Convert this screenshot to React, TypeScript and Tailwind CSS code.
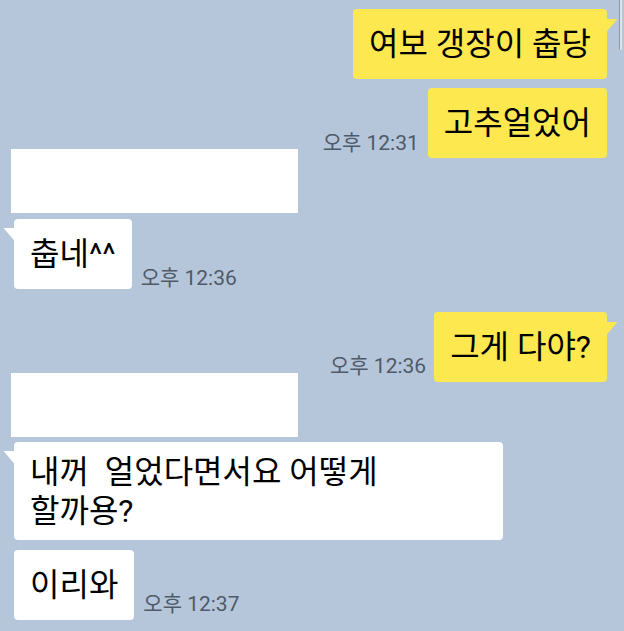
import type { ReactNode } from "react";

const font = { fontFamily: "Roboto, 'Noto Sans CJK KR', sans-serif" };

type Side = "me" | "them";

function Bubble({ side, tail, children, className = "" }: { side: Side; tail?: boolean; children: ReactNode; className?: string }) {
  const color = side === "me" ? "bg-[#fde84f]" : "bg-white";
  return (
    <div className={`relative rounded-[4px] ${color} px-[16px] text-[32px] leading-[39px] text-black ${className}`}>
      {tail && side === "me" && (
        <svg className="absolute right-[-11px] top-[10px]" width="12" height="14" viewBox="0 0 12 14">
          <path d="M0 0 H11.5 L0 13.5 Z" fill="#fde84f" />
        </svg>
      )}
      {tail && side === "them" && (
        <svg className="absolute left-[-11px] top-[9px]" width="12" height="14" viewBox="0 0 12 14">
          <path d="M12 0 H0.5 L12 13.5 Z" fill="#ffffff" />
        </svg>
      )}
      {children}
    </div>
  );
}

function Time({ children }: { children: ReactNode }) {
  return <span className="text-[21px] leading-none text-[#4e5a69] whitespace-nowrap">{children}</span>;
}

function Redacted() {
  return <div className="-ml-[3px] h-[64px] w-[287px] bg-white" />;
}

export default function App() {
  return (
    <div className="relative h-[631px] w-[624px] overflow-hidden bg-[#b6c6da]" style={font}>
      {/* scrollbar */}
      <div className="absolute right-[2px] top-0 h-[50px] w-[3px] rounded-b-sm border-l border-[#8c97a6] bg-[#dfe4ea]" />

      <div className="flex flex-col pl-[14px] pr-[17px] pt-[9px]">
        <div className="flex justify-end">
          <Bubble side="me" tail className="flex h-[70px] items-center">여보 갱장이 춥당</Bubble>
        </div>

        <div className="mt-[9px] flex items-end justify-end gap-[9px]">
          <div className="mb-[1px]"><Time>오후 12:31</Time></div>
          <Bubble side="me" className="flex h-[70px] items-center">고추얼었어</Bubble>
        </div>

        <div className="-mt-[9px]"><Redacted /></div>

        <div className="mt-[6px] flex items-end gap-[9px]">
          <Bubble side="them" tail className="flex h-[70px] items-center">춥네^^</Bubble>
          <Time>오후 12:36</Time>
        </div>

        <div className="mt-[23px] flex items-end justify-end gap-[8px]">
          <div className="mb-[2px]"><Time>오후 12:36</Time></div>
          <Bubble side="me" tail className="flex h-[70px] items-center">그게 다야?</Bubble>
        </div>

        <div className="-mt-[9px]"><Redacted /></div>

        <div className="mt-[5px] flex">
          <Bubble side="them" tail className="w-[489px] pb-[9px] pt-[11px] whitespace-pre-wrap">
            {"내꺼  얼었다면서요 어떻게"}
            <br />
            할까용?
          </Bubble>
        </div>

        <div className="mt-[10px] flex items-end gap-[9px]">
          <Bubble side="them" className="flex h-[70px] items-center">이리와</Bubble>
          <div className="mb-[2px]"><Time>오후 12:37</Time></div>
        </div>
      </div>
    </div>
  );
}
